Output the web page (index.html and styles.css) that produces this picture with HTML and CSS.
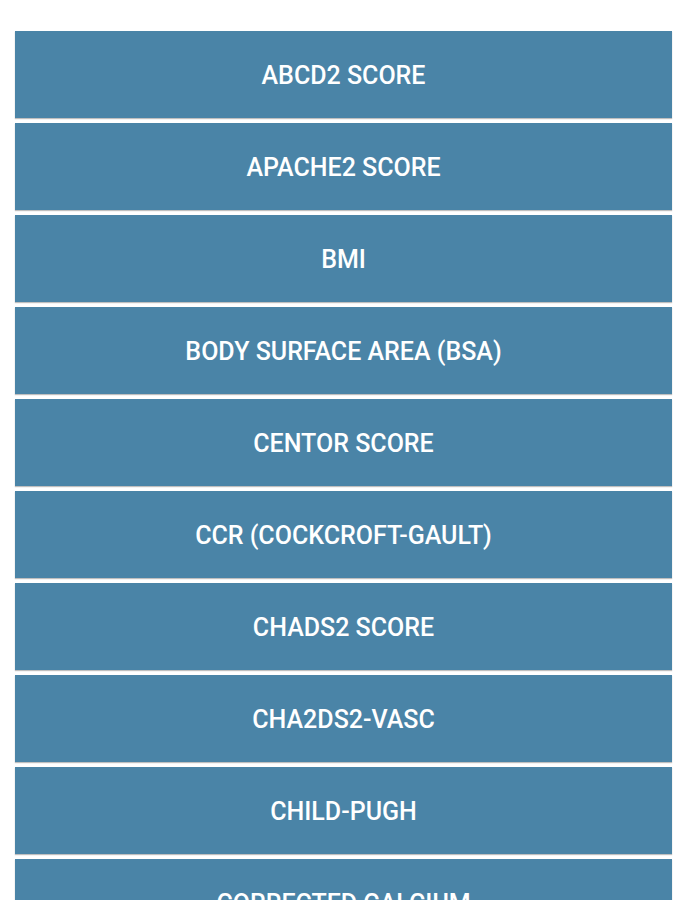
FILE: index.html
```html
<!DOCTYPE html>
<html>
<head>
<meta charset="utf-8">
<link rel="stylesheet" href="styles.css">
</head>
<body>
<div class="list">
  <button class="item">ABCD2 SCORE</button>
  <button class="item">APACHE2 SCORE</button>
  <button class="item">BMI</button>
  <button class="item">BODY SURFACE AREA (BSA)</button>
  <button class="item">CENTOR SCORE</button>
  <button class="item">CCR (COCKCROFT-GAULT)</button>
  <button class="item">CHADS2 SCORE</button>
  <button class="item">CHA2DS2-VASC</button>
  <button class="item">CHILD-PUGH</button>
  <button class="item">CORRECTED CALCIUM</button>
</div>
</body>
</html>
```
FILE: styles.css
```css
html, body {
  margin: 0;
  padding: 0;
  background: #ffffff;
  overflow: hidden;
}
.list {
  display: flex;
  flex-direction: column;
  gap: 5px;
  padding: 31px 15px 0 15px;
}
.item {
  display: flex;
  align-items: center;
  justify-content: center;
  height: 87px;
  width: 100%;
  border: none;
  margin: 0;
  padding: 2px 0 0 0;
  background: #4a84a7;
  color: #ffffff;
  font-family: Roboto, "Liberation Sans", sans-serif;
  font-weight: 500;
  font-size: 25px;
  letter-spacing: 0;
  box-shadow: 0 1px 1px rgba(0,0,0,0.25);
  flex-shrink: 0;
}
```
